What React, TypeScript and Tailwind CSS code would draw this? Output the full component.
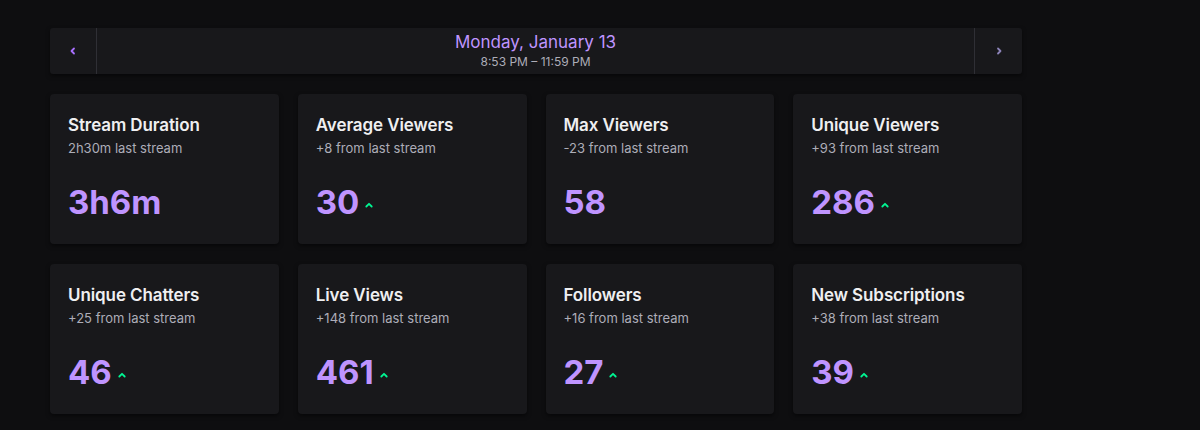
import React from "react";

const stats = [
  { title: "Stream Duration", sub: "2h30m last stream", value: "3h6m", up: false },
  { title: "Average Viewers", sub: "+8 from last stream", value: "30", up: true },
  { title: "Max Viewers", sub: "-23 from last stream", value: "58", up: false },
  { title: "Unique Viewers", sub: "+93 from last stream", value: "286", up: true },
  { title: "Unique Chatters", sub: "+25 from last stream", value: "46", up: true },
  { title: "Live Views", sub: "+148 from last stream", value: "461", up: true },
  { title: "Followers", sub: "+16 from last stream", value: "27", up: true },
  { title: "New Subscriptions", sub: "+38 from last stream", value: "39", up: true },
];

function Side({ dir, color }: { dir: "left" | "right"; color: string }) {
  const d = dir === "left" ? "M5 1.5 L2.5 4 L5 6.5" : "M3 1.5 L5.5 4 L3 6.5";
  return (
    <svg width="8" height="8" viewBox="0 0 8 8">
      <path d={d} fill="none" stroke={color} strokeWidth="1.8" strokeLinecap="round" strokeLinejoin="round" />
    </svg>
  );
}

function Up() {
  return (
    <svg width="8" height="6" viewBox="0 0 8 6">
      <path d="M1.3 4.5 L4 1.8 L6.7 4.5" fill="none" stroke="#00f593" strokeWidth="1.8" strokeLinecap="round" strokeLinejoin="round" />
    </svg>
  );
}

export default function App() {
  return (
    <div
      className="w-[1200px] h-[430px] bg-[#0e0e10] overflow-hidden pt-[28px] pl-[50px]"
      style={{ fontFamily: "Inter, 'Noto Sans', sans-serif" }}
    >
      <div className="w-[972px]">
        <div className="flex h-[46px] bg-[#18181b] rounded-[3px] shadow-[0_2px_4px_rgba(0,0,0,0.5)]">
          <div className="w-[47px] flex items-center justify-center border-r border-[#2f2f35]">
            <Side dir="left" color="#a970ff" />
          </div>
          <div className="flex-1 flex flex-col items-center justify-center pb-[1px]">
            <div className="text-[17px] leading-[18px] text-[#bf94ff]">Monday, January 13</div>
            <div className="text-[12px] leading-[15px] mt-[3px] text-[#adadb8]">8:53 PM – 11:59 PM</div>
          </div>
          <div className="w-[48px] flex items-center justify-center border-l border-[#2f2f35]">
            <Side dir="right" color="#8c83b8" />
          </div>
        </div>
        <div className="grid grid-cols-4 gap-x-[19px] gap-y-[20px] mt-[20px]">
          {stats.map((s) => (
            <div
              key={s.title}
              className="h-[150px] bg-[#18181b] rounded-[4px] shadow-[0_2px_4px_rgba(0,0,0,0.5)] px-[18px] pt-[20px]"
            >
              <div className="text-[17px] leading-[22px] font-semibold text-[#efeff1] tracking-[-0.1px]">{s.title}</div>
              <div className="text-[13px] leading-[18px] mt-[3px] text-[#adadb8]">{s.sub}</div>
              <div className="flex items-center mt-[25px]">
                <span className="text-[33px] leading-[40px] font-bold text-[#bf94ff]">{s.value}</span>
                {s.up && (
                  <span className="ml-[6px] mt-[6px] flex">
                    <Up />
                  </span>
                )}
              </div>
            </div>
          ))}
        </div>
      </div>
    </div>
  );
}
